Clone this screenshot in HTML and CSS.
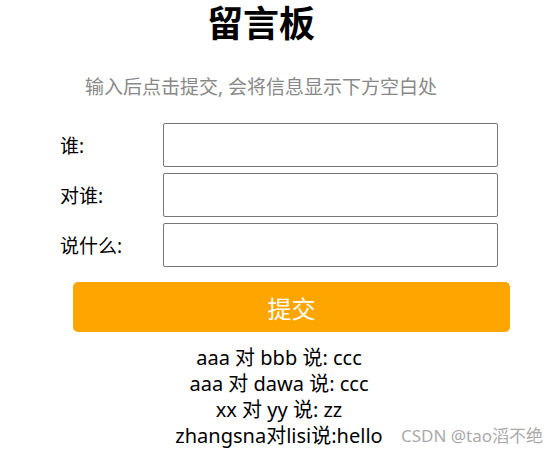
FILE: index.html
```html
<!DOCTYPE html>
<html lang="zh-CN">
<head>
    <meta charset="UTF-8">
    <meta name="viewport" content="width=device-width, initial-scale=1.0">
    <title>留言板</title>
    <link rel="stylesheet" href="styles.css">
</head>
<body>
    <div class="container">
        <h1>留言板</h1>
        <p class="tip">输入后点击提交, 会将信息显示下方空白处</p>

        <div class="row">
            <span class="label">谁:</span>
            <input type="text" class="field">
        </div>
        <div class="row">
            <span class="label">对谁:</span>
            <input type="text" class="field">
        </div>
        <div class="row">
            <span class="label">说什么:</span>
            <input type="text" class="field">
        </div>

        <button class="submit">提交</button>

        <div class="messages">
            <div>aaa 对 bbb 说: ccc</div>
            <div>aaa 对 dawa 说: ccc</div>
            <div>xx 对 yy 说: zz</div>
            <div>zhangsna对lisi说:hello</div>
        </div>
    </div>

    <div class="watermark">CSDN @tao滔不绝</div>
</body>
</html>
```

FILE: styles.css
```css
* {
    margin: 0;
    padding: 0;
    box-sizing: border-box;
}
body {
    font-family: "Noto Sans", "Noto Sans CJK SC", sans-serif;
    color: #000;
    background-color: #fff;
    position: relative;
    height: 454px;
    overflow: hidden;
}
.container {
    width: 558px;
}
h1 {
    width: 522px;
    text-align: center;
    font-size: 36px;
    line-height: 52px;
    margin-top: -2px;
    font-weight: bold;
}
.tip {
    width: 522px;
    text-align: center;
    color: #888;
    font-size: 19px;
    line-height: 28px;
    margin-top: 23px;
    margin-bottom: 22px;
}
.row {
    display: flex;
    align-items: center;
    margin-bottom: 6px;
}
.label {
    width: 163px;
    padding-left: 60px;
    font-size: 19px;
}
.field {
    width: 335px;
    height: 44px;
    border: 1px solid #767676;
    border-radius: 2px;
    outline: none;
}
.submit {
    display: block;
    margin: 15px 0 0 73px;
    width: 437px;
    height: 50px;
    border: none;
    border-radius: 5px;
    background-color: orange;
    color: #fff;
    font-family: inherit;
    font-size: 24px;
}
.messages {
    margin-top: 13px;
    text-align: center;
    font-size: 20px;
    line-height: 26px;
}
.watermark {
    position: absolute;
    right: 15px;
    top: 423px;
    font-size: 17px;
    line-height: 26px;
    color: #aaa;
    text-shadow: 0 0 2px #fff;
}
```
